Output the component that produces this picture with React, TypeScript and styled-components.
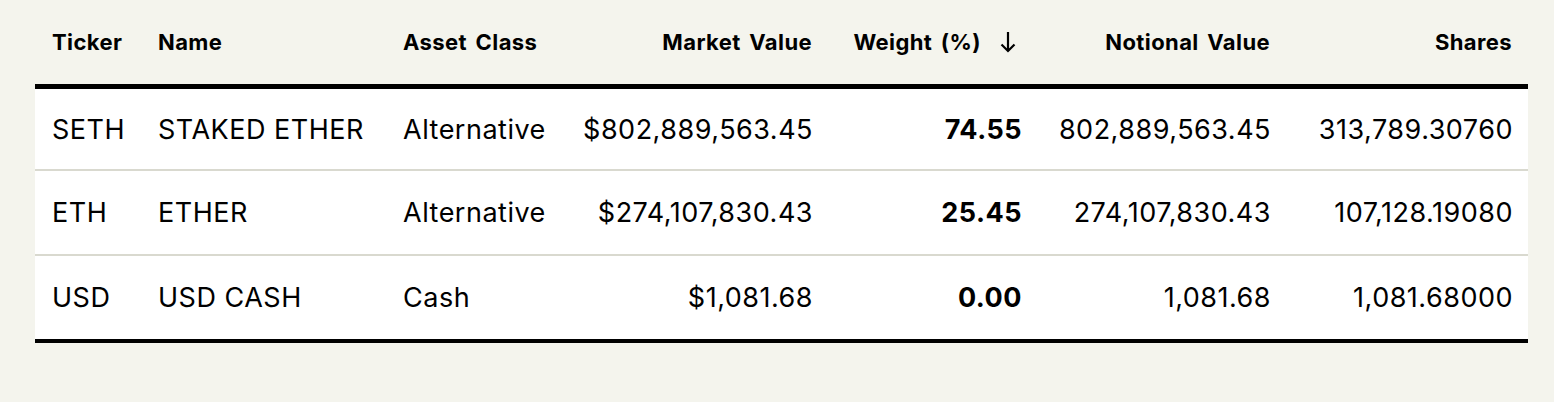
import React from "react";
import styled, { createGlobalStyle } from "styled-components";

interface Holding {
  ticker: string;
  name: string;
  assetClass: string;
  marketValue: string;
  weight: string;
  notional: string;
  shares: string;
}

const holdings: Holding[] = [
  {
    ticker: "SETH",
    name: "STAKED ETHER",
    assetClass: "Alternative",
    marketValue: "$802,889,563.45",
    weight: "74.55",
    notional: "802,889,563.45",
    shares: "313,789.30760",
  },
  {
    ticker: "ETH",
    name: "ETHER",
    assetClass: "Alternative",
    marketValue: "$274,107,830.43",
    weight: "25.45",
    notional: "274,107,830.43",
    shares: "107,128.19080",
  },
  {
    ticker: "USD",
    name: "USD CASH",
    assetClass: "Cash",
    marketValue: "$1,081.68",
    weight: "0.00",
    notional: "1,081.68",
    shares: "1,081.68000",
  },
];

const COLUMNS = "106px 245px 183px 259px 209px 249px 242px";

export default function App() {
  return (
    <Page>
      <GlobalStyle />
      <Table>
        <HeaderRow>
          <HeadCell>Ticker</HeadCell>
          <HeadCell>Name</HeadCell>
          <HeadCell>Asset Class</HeadCell>
          <HeadCell $right>Market Value</HeadCell>
          <HeadCell $right>
            Weight (%)
            <SortArrow />
          </HeadCell>
          <HeadCell $right>Notional Value</HeadCell>
          <HeadCell $right>Shares</HeadCell>
        </HeaderRow>
        {holdings.map((h, i) => (
          <BodyRow key={h.ticker} $first={i === 0}>
            <Cell>{h.ticker}</Cell>
            <Cell>{h.name}</Cell>
            <Cell>{h.assetClass}</Cell>
            <Cell $right>{h.marketValue}</Cell>
            <Cell $right $bold>
              {h.weight}
            </Cell>
            <Cell $right>{h.notional}</Cell>
            <Cell $right>{h.shares}</Cell>
          </BodyRow>
        ))}
      </Table>
    </Page>
  );
}

const SortArrow = () => (
  <ArrowIcon width="16" height="22" viewBox="0 0 16 22" aria-hidden>
    <path
      d="M8 1 V20 M1.5 13.5 L8 20 L14.5 13.5"
      fill="none"
      stroke="#000"
      strokeWidth="2.2"
    />
  </ArrowIcon>
);

const GlobalStyle = createGlobalStyle`
  html, body {
    margin: 0;
    padding: 0;
    background: #f4f4ed;
  }
`;

const Page = styled.div`
  width: 1554px;
  height: 402px;
  box-sizing: border-box;
  padding-left: 35px;
  background: #f4f4ed;
  color: #000;
  font-family: "Inter", "Liberation Sans", sans-serif;
`;

const Table = styled.div`
  width: 1493px;
  border-bottom: 4px solid #000;
`;

const HeaderRow = styled.div`
  display: grid;
  grid-template-columns: ${COLUMNS};
  height: 84px;
  border-bottom: 5px solid #000;
  align-items: center;
`;

const BodyRow = styled.div<{ $first?: boolean }>`
  display: grid;
  grid-template-columns: ${COLUMNS};
  height: ${(p) => (p.$first ? "80px" : "83px")};
  border-top: ${(p) => (p.$first ? "none" : "2px solid #d9d9cf")};
  background: #fff;
  align-items: center;
`;

const HeadCell = styled.div<{ $right?: boolean }>`
  display: flex;
  align-items: center;
  justify-content: ${(p) => (p.$right ? "flex-end" : "flex-start")};
  padding: ${(p) => (p.$right ? "0 16px 0 0" : "0 16px 0 17px")};
  font-family: "Inter", "Liberation Sans", sans-serif;
  font-weight: 700;
  font-size: 22px;
  letter-spacing: 0.4px;
  word-spacing: 3px;
  white-space: nowrap;
`;

const ArrowIcon = styled.svg`
  margin-left: 19px;
  margin-right: 5px;
  flex: none;
`;

const Cell = styled.div<{ $right?: boolean; $bold?: boolean }>`
  padding: ${(p) => (p.$right ? "0 15px 0 0" : "0 16px 0 17px")};
  text-align: ${(p) => (p.$right ? "right" : "left")};
  font-size: 27px;
  letter-spacing: 0.5px;
  font-weight: ${(p) => (p.$bold ? 700 : 400)};
  white-space: nowrap;
`;
